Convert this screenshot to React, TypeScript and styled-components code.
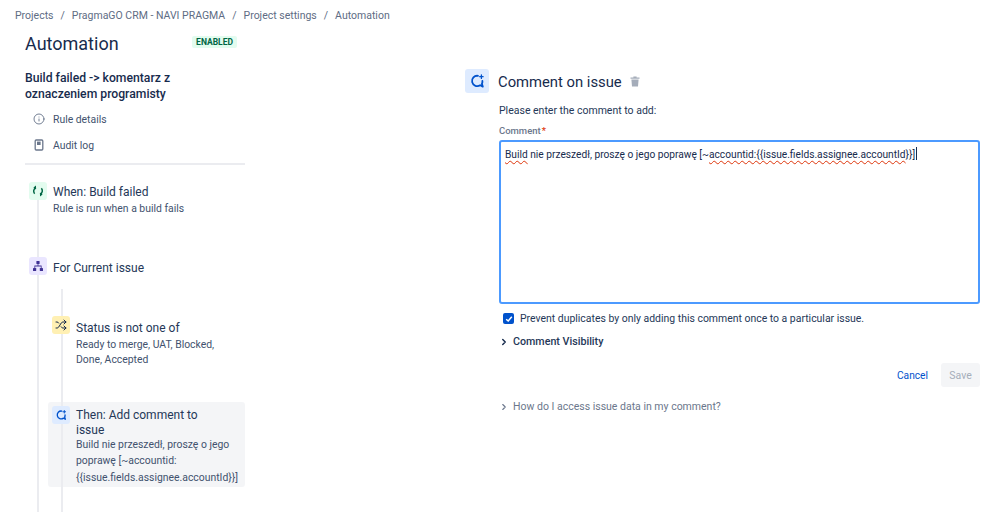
import React from "react";
import styled, { createGlobalStyle } from "styled-components";
import { Shuffle, Info, ChevronRight } from "lucide-react";

const GlobalStyle = createGlobalStyle`
  html, body {
    margin: 0;
    padding: 0;
    background: #fff;
  }
  body {
    font-family: Roboto, "Noto Sans", sans-serif;
    color: #172b4d;
  }
`;

const crumbs = ["Projects", "PragmaGO CRM - NAVI PRAGMA", "Project settings", "Automation"];

function CommentGlyph({ size }: { size: number }) {
  return (
    <svg width={size} height={size} viewBox="0 0 16 16" fill="none">
      <path
        d="M9 2.8A5.2 5.2 0 1 0 11.2 12.2L13.8 13.6L12.9 10.8A5.2 5.2 0 0 0 13.4 8"
        stroke="#0052cc"
        strokeWidth="1.8"
        strokeLinecap="round"
        strokeLinejoin="round"
      />
      <path d="M12.4 2v3.4M10.7 3.7h3.4" stroke="#0052cc" strokeWidth="1.3" strokeLinecap="round" />
    </svg>
  );
}

function App() {
  return (
    <Page>
      <GlobalStyle />
      <Breadcrumbs>
        {crumbs.map((c, i) => (
          <React.Fragment key={c}>
            {i > 0 && <Slash>/</Slash>}
            <span>{c}</span>
          </React.Fragment>
        ))}
      </Breadcrumbs>
      <Columns>
        <Sidebar>
          <HeadingRow>
            <Heading>Automation</Heading>
            <Badge>ENABLED</Badge>
          </HeadingRow>
          <RuleTitle>
            Build failed -&gt; komentarz z
            <br />
            oznaczeniem programisty
          </RuleTitle>
          <NavItem>
            <NavIcon>
              <Info size={12} strokeWidth={1.6} color="#505f79" />
            </NavIcon>
            Rule details
          </NavItem>
          <NavItem>
            <NavIcon>
              <svg width="12" height="12" viewBox="0 0 12 12" fill="none">
                <rect x="2.2" y="1" width="7.6" height="10" rx="1" stroke="#6b778c" strokeWidth="1.3" />
                <rect x="4" y="2.6" width="3.6" height="3.4" fill="#6b778c" />
              </svg>
            </NavIcon>
            Audit log
          </NavItem>
          <Divider />
          <Timeline>
            <Step $height={75}>
              <StepIcon $bg="#e3fcef">
                <svg width="12" height="12" viewBox="0 0 12 12" fill="none">
                  <path d="M2.6 8.8A4 4 0 0 1 4 2.6" stroke="#006644" strokeWidth="1.5" />
                  <path d="M9.4 3.2A4 4 0 0 1 8 9.4" stroke="#006644" strokeWidth="1.5" />
                  <path d="M4 0.6V4.6L1.4 2.6ZM8 11.4V7.4L10.6 9.4Z" fill="#006644" />
                </svg>
              </StepIcon>
              <StepBody>
                <StepTitle>When: Build failed</StepTitle>
                <StepText>Rule is run when a build fails</StepText>
              </StepBody>
            </Step>
            <Step $height={32}>
              <StepIcon $bg="#eae6ff">
                <svg width="12" height="12" viewBox="0 0 12 12" fill="#403294">
                  <rect x="4.4" y="1" width="3.2" height="3" rx="0.6" />
                  <rect x="1" y="8" width="3.2" height="3" rx="0.6" />
                  <rect x="7.8" y="8" width="3.2" height="3" rx="0.6" />
                  <path d="M5.6 4h0.8v1.6h3.2V8h-0.8V6.4H3.2V8h-0.8V5.6h3.2z" />
                </svg>
              </StepIcon>
              <ForBody>
                <StepTitle>For Current issue</StepTitle>
              </ForBody>
            </Step>
            <Branch>
              <Step $height={86}>
                <StepIcon $bg="#fff0b3">
                  <Shuffle size={12} strokeWidth={2} color="#172b4d" />
                </StepIcon>
                <ConditionBody>
                  <StepTitle>Status is not one of</StepTitle>
                  <StepText>
                    Ready to merge, UAT, Blocked,
                    <br />
                    Done, Accepted
                  </StepText>
                </ConditionBody>
              </Step>
              <SelectedStep>
                <StepIcon $bg="#deebff">
                  <CommentGlyph size={12} />
                </StepIcon>
                <SelectedBody>
                  <StepTitle>
                    Then: Add comment to
                    <br />
                    issue
                  </StepTitle>
                  <StepTextTall>
                    Build nie przeszedł, proszę o jego
                    <br />
                    poprawę [~accountid:
                    <br />
                    {"{{issue.fields.assignee.accountId}}]"}
                  </StepTextTall>
                </SelectedBody>
              </SelectedStep>
            </Branch>
          </Timeline>
        </Sidebar>
        <Panel>
          <PanelHeader>
            <PanelIcon>
              <CommentGlyph size={16} />
            </PanelIcon>
            <PanelTitle>Comment on issue</PanelTitle>
            <svg width="10" height="11" viewBox="0 0 10 11" fill="#a5adba">
              <path d="M0.5 1.6h9v1.2h-9zM3.4 0.5h3.2v1h-3.2zM1.4 3.4h7.2l-0.6 7.1h-6z" />
            </svg>
          </PanelHeader>
          <PanelForm>
            <Hint>Please enter the comment to add:</Hint>
            <FieldLabel>
              Comment<Required>*</Required>
            </FieldLabel>
            <CommentBox>
              <Misspelt>Build</Misspelt> nie przeszedł, proszę o jego poprawę [~
              <Misspelt>{"accountid:{{issue.fields.assignee.accountId"}</Misspelt>
              {"}}]"}
              <Caret />
            </CommentBox>
            <CheckRow>
              <CheckBox>
                <svg width="8" height="8" viewBox="0 0 8 8" fill="none">
                  <path d="M1.2 4.2L3.2 6L6.8 1.8" stroke="#fff" strokeWidth="1.5" />
                </svg>
              </CheckBox>
              Prevent duplicates by only adding this comment once to a particular issue.
            </CheckRow>
            <Disclosure>
              <ChevronRight size={10} strokeWidth={3.4} color="#172b4d" />
              Comment Visibility
            </Disclosure>
            <Actions>
              <CancelLink>Cancel</CancelLink>
              <SaveButton>Save</SaveButton>
            </Actions>
            <HelpDisclosure>
              <ChevronRight size={10} strokeWidth={2.6} color="#6b778c" />
              How do I access issue data in my comment?
            </HelpDisclosure>
          </PanelForm>
        </Panel>
      </Columns>
    </Page>
  );
}

export default App;

const Page = styled.div`
  width: 999px;
  height: 512px;
  overflow: hidden;
`;

const Breadcrumbs = styled.div`
  display: flex;
  align-items: center;
  height: 31px;
  padding-left: 15px;
  font-size: 10.5px;
  color: #5e6c84;
  white-space: nowrap;
`;

const Slash = styled.span`
  margin: 0 7px;
`;

const Columns = styled.div`
  display: grid;
  grid-template-columns: 465px 1fr;
`;

const Sidebar = styled.aside`
  width: 220px;
  padding-left: 25px;
`;

const HeadingRow = styled.div`
  display: flex;
  align-items: flex-start;
  justify-content: space-between;
  width: 212px;
  height: 31px;
  padding-top: 2px;
  margin-bottom: -1px;
`;

const Heading = styled.h1`
  margin: 0;
  font-size: 18px;
  font-weight: 400;
  line-height: 22px;
  color: #172b4d;
`;

const Badge = styled.span`
  margin-top: 3px;
  padding: 0 4px;
  height: 12px;
  line-height: 12px;
  border-radius: 2px;
  background: #e3fcef;
  color: #006644;
  font-size: 8.5px;
  font-weight: 700;
`;

const RuleTitle = styled.div`
  height: 32px;
  margin: 7px 0 4px;
  font-size: 12.2px;
  font-weight: 500;
  line-height: 16px;
`;

const NavItem = styled.div`
  display: flex;
  align-items: center;
  height: 26px;
  font-size: 10.4px;
  color: #42526e;
`;

const NavIcon = styled.span`
  display: flex;
  justify-content: center;
  width: 28px;
`;

const Divider = styled.div`
  height: 2px;
  margin-top: 5px;
  margin-bottom: 17px;
  background: #ebecf0;
`;

const Timeline = styled.div`
  position: relative;
  padding-left: 4px;
  &::before {
    content: "";
    position: absolute;
    left: 12px;
    top: 10px;
    width: 2px;
    height: 400px;
    background: #ebecf0;
  }
`;

const Step = styled.div<{ $height: number }>`
  position: relative;
  display: flex;
  gap: 6px;
  height: ${({ $height }) => $height}px;
`;

const StepIcon = styled.span<{ $bg: string }>`
  flex: none;
  display: flex;
  align-items: center;
  justify-content: center;
  width: 18px;
  height: 18px;
  border-radius: 3px;
  background: ${({ $bg }) => $bg};
`;

const StepBody = styled.div`
  padding-top: 3px;
  min-width: 0;
`;

const ForBody = styled(StepBody)`
  padding-top: 4px;
`;

const ConditionBody = styled(StepBody)`
  padding-top: 5px;
`;

const SelectedBody = styled(StepBody)`
  padding-top: 2px;
`;

const StepTitle = styled.div`
  font-size: 12px;
  line-height: 15px;
  color: #253858;
`;

const StepText = styled.div`
  margin-top: 1px;
  font-size: 10.4px;
  line-height: 15px;
  color: #42526e;
`;

const StepTextTall = styled(StepText)`
  margin-top: -1px;
  line-height: 16.4px;
`;

const Branch = styled.div`
  position: relative;
  padding-left: 23px;
  padding-top: 27px;
  &::before {
    content: "";
    position: absolute;
    left: 32px;
    top: 0;
    width: 2px;
    height: 240px;
    background: #ebecf0;
  }
`;

const SelectedStep = styled.div`
  position: relative;
  display: flex;
  gap: 6px;
  box-sizing: border-box;
  width: 197px;
  height: 85px;
  margin-left: -4px;
  padding: 4px;
  border-radius: 3px;
  background: rgba(235, 236, 240, 0.55);
`;

const Panel = styled.main`
  padding-top: 38px;
`;

const PanelHeader = styled.div`
  display: flex;
  align-items: center;
  height: 24px;
`;

const PanelIcon = styled.span`
  display: flex;
  align-items: center;
  justify-content: center;
  width: 24px;
  height: 24px;
  margin-right: 9px;
  border-radius: 3px;
  background: #deebff;
`;

const PanelTitle = styled.h2`
  margin: 0 8px 0 0;
  padding-top: 2px;
  font-size: 14.8px;
  font-weight: 400;
  color: #172b4d;
`;

const PanelForm = styled.div`
  width: 481px;
  margin-left: 34px;
  padding-top: 10px;
`;

const Hint = styled.div`
  height: 15px;
  font-size: 10.5px;
  line-height: 15px;
  color: #253858;
`;

const FieldLabel = styled.div`
  height: 15px;
  margin-top: 5px;
  font-size: 9.5px;
  font-weight: 500;
  line-height: 15px;
  color: #6b778c;
`;

const Required = styled.span`
  margin-left: 1px;
  color: #de350b;
`;

const CommentBox = styled.div`
  box-sizing: border-box;
  height: 164px;
  margin-top: 2px;
  padding: 5px 4px;
  border: 2px solid #4c9aff;
  border-radius: 3px;
  font-size: 10.2px;
  line-height: 16px;
  color: #172b4d;
  white-space: nowrap;
`;

const Misspelt = styled.span`
  text-decoration: underline wavy #de350b 1px;
  text-underline-offset: 2px;
`;

const Caret = styled.span`
  display: inline-block;
  width: 1px;
  height: 13px;
  margin-left: 1px;
  vertical-align: -2px;
  background: #172b4d;
`;

const CheckRow = styled.div`
  display: flex;
  align-items: center;
  height: 15px;
  margin-top: 7px;
  padding-left: 4px;
  font-size: 10.45px;
  color: #253858;
`;

const CheckBox = styled.span`
  display: flex;
  align-items: center;
  justify-content: center;
  width: 11px;
  height: 11px;
  margin-right: 6px;
  border-radius: 2px;
  background: #0052cc;
`;

const Disclosure = styled.div`
  display: flex;
  align-items: center;
  gap: 4px;
  height: 15px;
  margin-top: 8px;
  font-size: 10.7px;
  font-weight: 500;
  color: #253858;
`;

const Actions = styled.div`
  display: flex;
  align-items: center;
  justify-content: flex-end;
  gap: 13px;
  height: 24px;
  margin-top: 14px;
`;

const CancelLink = styled.span`
  font-size: 10.2px;
  color: #0052cc;
`;

const SaveButton = styled.span`
  display: flex;
  align-items: center;
  justify-content: center;
  width: 39px;
  height: 24px;
  border-radius: 3px;
  background: #f4f5f7;
  color: #a5adba;
  font-size: 10.5px;
`;

const HelpDisclosure = styled(Disclosure)`
  margin-top: 12px;
  font-size: 10.5px;
  font-weight: 400;
  color: #6b778c;
`;
